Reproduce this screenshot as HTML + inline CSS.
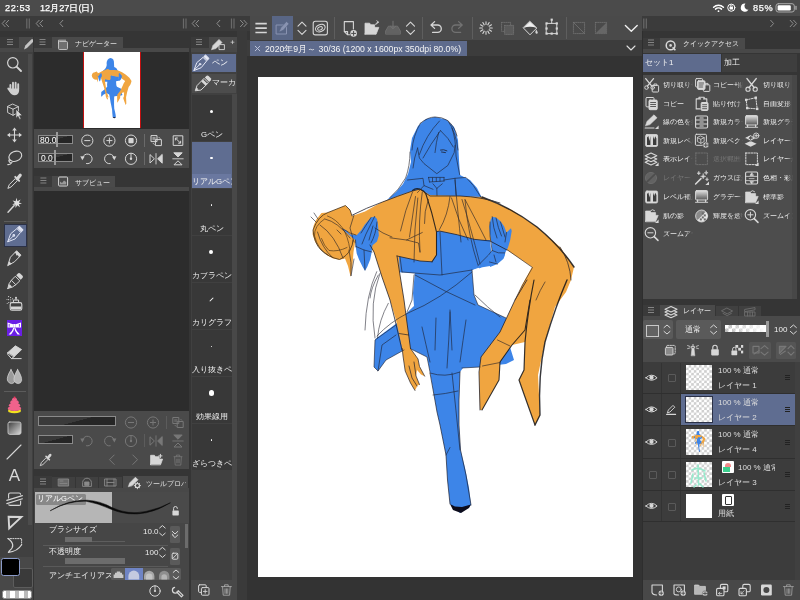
<!DOCTYPE html>
<html>
<head>
<meta charset="utf-8">
<title>CLIP STUDIO PAINT</title>
<style>
html,body{margin:0;padding:0;}
body{width:800px;height:600px;overflow:hidden;background:#3c3c3c;font-family:"Liberation Sans",sans-serif;color:#e6e6e6;font-size:8px;position:relative;}
.a{position:absolute;}
.t{position:absolute;white-space:nowrap;line-height:1;will-change:transform;}
svg{position:absolute;overflow:visible;}
.ic{stroke:#dcdcdc;fill:none;stroke-width:1.1;stroke-linecap:round;stroke-linejoin:round;}
.dim{opacity:.35;}
.sb{font-size:9.2px;color:#fff;-webkit-text-stroke:.25px #fff;}
.tab{font-size:7.4px;color:#e4e4e4;}
.lb{font-size:7.6px;color:#ececec;}
.sl{background:linear-gradient(165deg,#3a3a3a 0%,#3a3a3a 50%,#262626 51%,#262626 100%);border:1px solid #8a8a8a;box-sizing:border-box;}
.cell{position:absolute;left:191.5px;width:40px;height:46px;background:#383838;}
.cl{position:absolute;left:191.5px;width:40px;text-align:center;font-size:7.8px;color:#f0f0f0;white-space:nowrap;overflow:hidden;line-height:1;will-change:transform;}
.ly{font-size:8px;color:#dedede;}
.qa{font-size:6.8px;color:#f0f0f0;width:30.5px;overflow:hidden;-webkit-mask-image:linear-gradient(90deg,#000 76%,transparent 97%);}
.qd{color:#777;}
#opsl{background-color:#fff;background-image:linear-gradient(90deg,rgba(255,255,255,0),#fff),linear-gradient(45deg,#bbb 25%,transparent 25%,transparent 75%,#bbb 75%),linear-gradient(45deg,#bbb 25%,transparent 25%,transparent 75%,#bbb 75%);background-size:100% 100%,7px 7px,7px 7px;background-position:0 0,0 0,3.5px 3.5px;}
.dot{position:absolute;background:#fff;border-radius:50%;}
</style>
</head>
<body>
<!-- status bar -->
<div class="a" style="left:0;top:0;width:800px;height:16px;background:#4b4b4b;"></div>
<div class="t sb" style="left:5px;top:3.5px;letter-spacing:.55px;">22:53</div>
<div class="t sb" style="left:40px;top:3.5px;">12月27日(日)</div>
<div class="t sb" style="left:752.5px;top:3.5px;letter-spacing:.7px;">85%</div>

<!-- dock header rows -->
<div class="a" style="left:0;top:16px;width:800px;height:15px;background:#3b3b3b;"></div>
<div class="a" style="left:0;top:31px;width:800px;height:569px;background:#353535;"></div>

<!-- LEFT TOOL PALETTE -->
<div class="a" style="left:0;top:37px;width:19px;height:11px;background:#3a3a3a;"></div>
<div class="a" style="left:19px;top:37px;width:14px;height:11px;background:#4a4a4a;"></div>
<div class="a" style="left:0;top:48px;width:33px;height:4px;background:#484848;"></div>
<div class="a" style="left:0;top:52px;width:33px;height:548px;background:#404040;"></div>
<div class="a" style="left:27.5px;top:54px;width:4px;height:471px;background:#4c4c4c;"></div>
<div class="a" style="left:4px;top:221px;width:22px;height:1px;background:#5c5c5c;"></div>
<div class="a" style="left:4px;top:391px;width:22px;height:1px;background:#5c5c5c;"></div>
<div class="a" style="left:3.5px;top:223.5px;width:21px;height:21px;background:#5f6d91;border:1px solid #2b3147;"></div>
<div class="a" style="left:6.5px;top:320px;width:15.5px;height:15.5px;background:#6a1ee6;"></div>
<div class="a" style="left:0;top:556.5px;width:33px;height:43.5px;background:#484848;"></div>
<div class="a" style="left:12.5px;top:567.5px;width:18px;height:18px;background:#3a3a3a;border:1px solid #5c5c5c;border-radius:2px;"></div>
<div class="a" style="left:1.3px;top:557.5px;width:16.4px;height:16px;background:#000;border:1.4px solid #8b9bc9;border-radius:2.5px;"></div>
<div class="a" style="left:1.7px;top:590px;width:28px;height:6.5px;border:1px solid #8a8a8a;border-radius:2.5px;background:#fff;overflow:hidden;"><div class="a" style="left:3px;top:0;width:4.5px;height:7px;background:#bbb;box-shadow:9px 0 0 #bbb,18px 0 0 #bbb;"></div></div>

<!-- NAVIGATOR -->
<div class="a" style="left:34px;top:37px;width:18px;height:11px;background:#3a3a3a;"></div>
<div class="a" style="left:52px;top:37px;width:71px;height:11px;background:#4a4a4a;"></div>
<div class="t tab" style="left:75px;top:40.3px;">ナビゲーター</div>
<div class="a" style="left:34px;top:48px;width:155px;height:4px;background:#484848;"></div>
<div class="a" style="left:34px;top:52px;width:155px;height:77px;background:#2c2c2c;"></div>
<div class="a" style="left:83px;top:52px;width:58px;height:76px;background:#fff;border-left:1px solid #c01010;border-right:1px solid #c01010;box-sizing:border-box;"></div>
<div class="a" style="left:34px;top:128.7px;width:155px;height:39.8px;background:#4a4a4a;"></div>
<div class="a sl" style="left:38.3px;top:134.9px;width:34.4px;height:8.8px;"></div>
<div class="a sl" style="left:38.3px;top:153.4px;width:34.4px;height:8.8px;"></div>
<div class="t" style="left:39.5px;top:135.5px;font-size:8.5px;color:#fff;">80.0</div>
<div class="t" style="left:41px;top:154px;font-size:8.5px;color:#fff;">0.0</div>
<div class="a" style="left:55.8px;top:131.5px;width:2.2px;height:15px;background:#9a9a9a;"></div>
<div class="a" style="left:54.2px;top:150px;width:2.2px;height:15px;background:#9a9a9a;"></div>
<div class="a" style="left:144px;top:134px;width:1px;height:13px;background:#6a6a6a;"></div>
<div class="a" style="left:144px;top:152px;width:1px;height:13px;background:#6a6a6a;"></div>

<!-- SUBVIEW -->
<div class="a" style="left:34px;top:175.5px;width:18px;height:11.5px;background:#3a3a3a;"></div>
<div class="a" style="left:52px;top:175.5px;width:62.5px;height:11.5px;background:#4a4a4a;"></div>
<div class="t tab" style="left:74.5px;top:179px;">サブビュー</div>
<div class="a" style="left:34px;top:187px;width:155px;height:4px;background:#484848;"></div>
<div class="a" style="left:34px;top:191px;width:155px;height:220px;background:#2c2c2c;"></div>
<div class="a" style="left:34px;top:410.8px;width:155px;height:58.6px;background:#4a4a4a;"></div>
<div class="a sl" style="left:38.3px;top:416.3px;width:78px;height:9.3px;"></div>
<div class="a sl" style="left:38.3px;top:435.3px;width:34.4px;height:8.7px;"></div>
<div class="a" style="left:165.5px;top:416px;width:1px;height:13px;background:#5c5c5c;"></div>
<div class="a" style="left:144px;top:434px;width:1px;height:13px;background:#5c5c5c;"></div>

<!-- TOOL PROPERTY -->
<div class="a" style="left:34px;top:475.5px;width:18px;height:12px;background:#3a3a3a;"></div>
<div class="a" style="left:52.3px;top:476.5px;width:22.7px;height:11px;background:#404040;"></div>
<div class="a" style="left:76px;top:476.5px;width:22px;height:11px;background:#404040;"></div>
<div class="a" style="left:99px;top:476.5px;width:22.8px;height:11px;background:#404040;"></div>
<div class="a" style="left:122.8px;top:475.5px;width:65px;height:12px;background:#4a4a4a;"></div>
<div class="t tab" style="left:145.5px;top:479.8px;width:40px;overflow:hidden;">ツールプロパ</div>
<div class="a" style="left:34px;top:487.5px;width:155px;height:4px;background:#484848;"></div>
<div class="a" style="left:34px;top:491.5px;width:155px;height:88.5px;background:#464646;"></div>
<div class="a" style="left:35px;top:492px;width:77px;height:30.5px;background:#b6b6b6;"></div>
<div class="a" style="left:112px;top:492px;width:77px;height:30.5px;background:#4a4a4a;"></div>
<div class="a" style="left:36px;top:494px;width:50px;height:10.5px;background:rgba(120,120,120,.75);border-radius:1.5px;"></div>
<div class="t" style="left:37px;top:495px;font-size:7.6px;color:#fff;">リアルGペン</div>
<div class="t lb" style="left:48.7px;top:526px;">ブラシサイズ</div>
<div class="t lb" style="left:48.7px;top:547.5px;">不透明度</div>
<div class="t lb" style="left:48.7px;top:571.5px;">アンチエイリアス</div>
<div class="t lb" style="left:142.5px;top:527.5px;font-size:8px;">10.0</div>
<div class="t lb" style="left:145.3px;top:549.3px;font-size:8px;">100</div>
<div class="a" style="left:64.5px;top:540.6px;width:60px;height:1.2px;background:#5e5e5e;"></div>
<div class="a" style="left:64.5px;top:536.5px;width:27.5px;height:5px;background:#6c6c6c;"></div>
<div class="a" style="left:64.5px;top:558px;width:60px;height:5.5px;background:#6c6c6c;"></div>
<div class="a" style="left:43px;top:544.7px;width:125px;height:1px;background:#5a5a5a;"></div>
<div class="a" style="left:43px;top:566px;width:125px;height:1px;background:#5a5a5a;"></div>
<div class="a" style="left:169.5px;top:525.5px;width:10.5px;height:17.5px;background:#5a5a5a;border-radius:1.5px;"></div>
<div class="a" style="left:169.5px;top:547.5px;width:10.5px;height:17.5px;background:#5a5a5a;border-radius:1.5px;"></div>
<div class="a" style="left:111px;top:567.5px;width:69.5px;height:12.5px;background:#5a5a5a;border-radius:1.5px;"></div>
<div class="a" style="left:125px;top:567.5px;width:17.5px;height:12.5px;background:#6f84c4;"></div>
<div class="a" style="left:184.5px;top:524px;width:3.5px;height:23.5px;background:#6c6c6c;"></div>
<div class="a" style="left:34px;top:580px;width:155px;height:20px;background:#484848;"></div>

<!-- SUBTOOL -->
<div class="a" style="left:191px;top:37px;width:17.5px;height:11px;background:#3a3a3a;"></div>
<div class="a" style="left:208.5px;top:37px;width:28.5px;height:11px;background:#4a4a4a;"></div>
<div class="a" style="left:191px;top:48px;width:46px;height:4px;background:#484848;"></div>
<div class="a" style="left:191px;top:52px;width:46px;height:528px;background:#404040;"></div>
<div class="a" style="left:232px;top:94px;width:5px;height:486px;background:#484848;"></div>
<div class="a" style="left:191px;top:580px;width:46px;height:20px;background:#484848;"></div>
<div class="a" style="left:191.5px;top:54px;width:44px;height:18px;background:#5f6d91;"></div>
<div class="a" style="left:191.5px;top:74px;width:44px;height:18.5px;background:#4c4c4c;"></div>
<div class="t" style="left:212px;top:59px;font-size:7.6px;color:#fff;">ペン</div>
<div class="t" style="left:212px;top:79px;font-size:7.6px;color:#eee;width:23.5px;overflow:hidden;">マーカー</div>
<div class="cell" style="top:95px;background:#383838;"></div>
<div class="dot" style="left:209.8px;top:109.5px;width:3.0px;height:3.0px;"></div>
<div class="cl" style="top:130.5px;">Gペン</div>
<div class="cell" style="top:142px;background:#5f6d91;"></div>
<div class="a" style="left:192px;top:174px;width:39px;height:13.5px;background:#6a78a0;"></div>
<div class="dot" style="left:209.9px;top:156.6px;width:2.8px;height:2.8px;"></div>
<div class="cl" style="top:177.5px;text-align:left;">リアルGペン</div>
<div class="cell" style="top:189px;background:#383838;"></div>
<div class="dot" style="left:210.70000000000002px;top:204.4px;width:1.2px;height:1.2px;"></div>
<div class="cl" style="top:224.5px;">丸ペン</div>
<div class="cell" style="top:236px;background:#383838;"></div>
<div class="dot" style="left:209.4px;top:250.1px;width:3.8px;height:3.8px;"></div>
<div class="cl" style="top:271.5px;">カブラペン</div>
<div class="cell" style="top:283px;background:#383838;"></div>
<div class="a" style="left:209px;top:298.5px;width:5px;height:1px;background:#fff;transform:rotate(-45deg);"></div>
<div class="cl" style="top:318.5px;text-align:left;">カリグラフィ</div>
<div class="cell" style="top:330px;background:#383838;"></div>
<div class="dot" style="left:210.8px;top:345.5px;width:1.0px;height:1.0px;"></div>
<div class="cl" style="top:365.5px;text-align:left;">入り抜きペン</div>
<div class="cell" style="top:377px;background:#383838;"></div>
<div class="dot" style="left:208.6px;top:390.3px;width:5.4px;height:5.4px;"></div>
<div class="cl" style="top:412.5px;">効果線用</div>
<div class="cell" style="top:424px;background:#383838;"></div>
<div class="dot" style="left:210.5px;top:439.2px;width:1.6px;height:1.6px;"></div>
<div class="cl" style="top:459.5px;text-align:left;">ざらつきペン</div>

<!-- COMMAND BAR -->
<div class="a" style="left:237px;top:31px;width:10px;height:569px;background:#3a3a3a;"></div>
<div class="a" style="left:250px;top:16px;width:391.5px;height:24px;background:#4a4a4a;"></div>
<div class="a" style="left:272px;top:16px;width:21px;height:24px;background:#596685;"></div>
<div class="a" style="left:334px;top:17px;width:1px;height:22px;background:#5e5e5e;"></div>
<div class="a" style="left:422px;top:17px;width:1px;height:22px;background:#5e5e5e;"></div>
<div class="a" style="left:472px;top:17px;width:1px;height:22px;background:#5e5e5e;"></div>
<div class="a" style="left:566px;top:17px;width:1px;height:22px;background:#5e5e5e;"></div>
<!-- DOC TAB -->
<div class="a" style="left:247px;top:40px;width:394.5px;height:16px;background:#3c3c3c;"></div>
<div class="a" style="left:250px;top:41px;width:216.5px;height:15px;background:#5e6b8d;"></div>
<div class="t" id="doct" style="left:264.5px;top:45px;font-size:8.7px;color:#f4f4f4;">2020年9月～ 30/36 (1200 x 1600px 350dpi 80.0%)</div>
<!-- CANVAS AREA -->
<div class="a" style="left:247px;top:56px;width:394.5px;height:544px;background:#333333;"></div>
<div class="a" style="left:258px;top:77px;width:375.3px;height:500px;background:#ffffff;"></div>

<!-- QUICK ACCESS -->
<div class="a" style="left:641.5px;top:31px;width:1.5px;height:569px;background:#2e2e2e;"></div>
<div class="a" style="left:643px;top:37.5px;width:17px;height:11px;background:#3a3a3a;"></div>
<div class="a" style="left:660px;top:37.5px;width:85px;height:11px;background:#4a4a4a;"></div>
<div class="t tab" style="left:683px;top:39.5px;">クイックアクセス</div>
<div class="a" style="left:643px;top:48.5px;width:157px;height:4px;background:#484848;"></div>
<div class="a" style="left:643px;top:53.5px;width:77.5px;height:18.5px;background:#5e6b8d;"></div>
<div class="a" style="left:721.5px;top:53.5px;width:75.5px;height:18.5px;background:#3e3e3e;"></div>
<div class="t" style="left:645px;top:59px;font-size:8px;color:#f0f0f0;">セット1</div>
<div class="t" style="left:723.5px;top:59px;font-size:8px;color:#f0f0f0;">加工</div>
<div class="a" style="left:643px;top:74.5px;width:154px;height:224.5px;background:#4d4d4d;"></div>
<div class="a" style="left:791.5px;top:74.5px;width:5.5px;height:224.5px;background:#474747;"></div>
<div class="t qa" style="left:662.6px;top:82.0px;">切り取り+貼</div>
<div class="t qa" style="left:712.6px;top:82.0px;">コピー+貼り</div>
<div class="t qa" style="left:762.6px;top:82.0px;">切り取り</div>
<div class="t qa" style="left:662.6px;top:100.5px;">コピー</div>
<div class="t qa" style="left:712.6px;top:100.5px;">貼り付け</div>
<div class="t qa" style="left:762.6px;top:100.5px;">自由変形</div>
<div class="t qa" style="left:662.6px;top:119.0px;">線の色を描</div>
<div class="t qa" style="left:712.6px;top:119.0px;">新規カラー</div>
<div class="t qa" style="left:762.6px;top:119.0px;">新規グラデ</div>
<div class="t qa" style="left:662.6px;top:137.5px;">新規レベル</div>
<div class="t qa" style="left:712.6px;top:137.5px;">新規ベクタ</div>
<div class="t qa" style="left:762.6px;top:137.5px;">レイヤーを</div>
<div class="t qa" style="left:662.6px;top:156.0px;">表示レイヤ</div>
<div class="t qa qd" style="left:712.6px;top:156.0px;">選択範囲を</div>
<div class="t qa" style="left:762.6px;top:156.0px;">レイヤーか</div>
<div class="t qa qd" style="left:662.6px;top:175.0px;">レイヤーマ</div>
<div class="t qa" style="left:712.6px;top:175.0px;">ガウスぼか</div>
<div class="t qa" style="left:762.6px;top:175.0px;">色相・彩度</div>
<div class="t qa" style="left:662.6px;top:194.0px;">レベル補正</div>
<div class="t qa" style="left:712.6px;top:194.0px;">グラデーシ</div>
<div class="t qa" style="left:762.6px;top:194.0px;">標準影</div>
<div class="t qa" style="left:662.6px;top:213.0px;">肌の影</div>
<div class="t qa" style="left:712.6px;top:213.0px;">輝度を透明</div>
<div class="t qa" style="left:762.6px;top:213.0px;">ズームイン</div>
<div class="t qa" style="left:662.6px;top:231.0px;">ズームアウ</div>

<!-- LAYER PANEL -->
<div class="a" style="left:643px;top:305px;width:17px;height:11px;background:#3a3a3a;"></div>
<div class="a" style="left:660px;top:305px;width:55px;height:11px;background:#4a4a4a;"></div>
<div class="a" style="left:716.4px;top:306px;width:21.6px;height:10px;background:#404040;"></div>
<div class="a" style="left:739.4px;top:306px;width:21.6px;height:10px;background:#404040;"></div>
<div class="t tab" style="left:683px;top:307px;">レイヤー</div>
<div class="a" style="left:643px;top:316px;width:157px;height:46px;background:#4a4a4a;"></div>
<div class="a" style="left:643px;top:320px;width:30px;height:19px;background:#5a5a5a;border-radius:2px;"></div>
<div class="a" style="left:676px;top:320px;width:45px;height:19px;background:#5a5a5a;border-radius:2px;"></div>
<div class="a" style="left:646.4px;top:325px;width:11px;height:10px;border:1px solid #c8c8c8;background:#626262;"></div>
<div class="t" style="left:685px;top:325.5px;font-size:8px;color:#f0f0f0;">通常</div>
<div class="a" id="opsl" style="left:725px;top:325px;width:42px;height:7px;"></div>
<div class="a" style="left:766px;top:321px;width:2.5px;height:16px;background:#9a9a9a;"></div>
<div class="t" style="left:774.4px;top:326px;font-size:8px;color:#f0f0f0;">100</div>
<div class="a" style="left:749px;top:342px;width:22px;height:17px;background:#555555;border-radius:1.5px;"></div>
<div class="a" style="left:776px;top:342px;width:20px;height:17px;background:#555555;border-radius:1.5px;"></div>
<div class="a" style="left:643px;top:362px;width:157px;height:218px;background:#3c3c3c;"></div>
<div class="a" style="left:794.5px;top:362px;width:5.5px;height:218px;background:#404040;"></div>
<div class="a" style="left:643px;top:393px;width:151.5px;height:1px;background:#2f2f2f;"></div>
<div class="a" style="left:685.6px;top:365.1px;width:26px;height:24.9px;background-color:#fff;background-image:linear-gradient(45deg,#cfcfcf 25%,transparent 25%,transparent 75%,#cfcfcf 75%),linear-gradient(45deg,#cfcfcf 25%,transparent 25%,transparent 75%,#cfcfcf 75%);background-size:5.2px 5.2px;background-position:0 0,2.6px 2.6px;"></div>
<div class="t ly" style="left:718px;top:367.0px;">100 % 通常</div>
<div class="t ly" style="left:718px;top:382.0px;">レイヤー 1</div>
<div class="a" style="left:661px;top:362.5px;width:1px;height:30.5px;background:#333;"></div>
<div class="a" style="left:680px;top:362.5px;width:1px;height:30.5px;background:#333;"></div>
<div class="a" style="left:667.5px;top:374.25px;width:6px;height:6px;border:1px solid #5a5a5a;border-radius:1px;"></div>
<div class="a" style="left:784.5px;top:375.25px;width:5px;height:1px;background:#222;box-shadow:0 2px 0 #222,0 4px 0 #222;"></div>
<div class="a" style="left:681px;top:394px;width:113.5px;height:31px;background:#5f6d91;"></div>
<div class="a" style="left:643px;top:425px;width:151.5px;height:1px;background:#2f2f2f;"></div>
<div class="a" style="left:685.6px;top:396.6px;width:26px;height:25.4px;background-color:#fff;background-image:linear-gradient(45deg,#cfcfcf 25%,transparent 25%,transparent 75%,#cfcfcf 75%),linear-gradient(45deg,#cfcfcf 25%,transparent 25%,transparent 75%,#cfcfcf 75%);background-size:5.2px 5.2px;background-position:0 0,2.6px 2.6px;outline:1px solid #2b3147;"></div>
<div class="t ly" style="left:718px;top:398.5px;">100 % 通常</div>
<div class="t ly" style="left:718px;top:413.5px;">レイヤー 2</div>
<div class="a" style="left:661px;top:394px;width:1px;height:31px;background:#333;"></div>
<div class="a" style="left:680px;top:394px;width:1px;height:31px;background:#333;"></div>
<div class="a" style="left:784.5px;top:407.0px;width:5px;height:1px;background:#222;box-shadow:0 2px 0 #222,0 4px 0 #222;"></div>
<div class="a" style="left:643px;top:458px;width:151.5px;height:1px;background:#2f2f2f;"></div>
<div class="a" style="left:685.6px;top:428.6px;width:26px;height:26.4px;background-color:#fff;background-image:linear-gradient(45deg,#cfcfcf 25%,transparent 25%,transparent 75%,#cfcfcf 75%),linear-gradient(45deg,#cfcfcf 25%,transparent 25%,transparent 75%,#cfcfcf 75%);background-size:5.2px 5.2px;background-position:0 0,2.6px 2.6px;"></div>
<div class="t ly" style="left:718px;top:430.5px;">100 % 通常</div>
<div class="t ly" style="left:718px;top:445.5px;">レイヤー 4</div>
<div class="a" style="left:661px;top:426px;width:1px;height:32px;background:#333;"></div>
<div class="a" style="left:680px;top:426px;width:1px;height:32px;background:#333;"></div>
<div class="a" style="left:667.5px;top:438.5px;width:6px;height:6px;border:1px solid #5a5a5a;border-radius:1px;"></div>
<div class="a" style="left:784.5px;top:439.5px;width:5px;height:1px;background:#222;box-shadow:0 2px 0 #222,0 4px 0 #222;"></div>
<div class="a" style="left:643px;top:490px;width:151.5px;height:1px;background:#2f2f2f;"></div>
<div class="a" style="left:685.6px;top:461.6px;width:26px;height:25.4px;background-color:#fff;background-image:linear-gradient(45deg,#cfcfcf 25%,transparent 25%,transparent 75%,#cfcfcf 75%),linear-gradient(45deg,#cfcfcf 25%,transparent 25%,transparent 75%,#cfcfcf 75%);background-size:5.2px 5.2px;background-position:0 0,2.6px 2.6px;"></div>
<div class="a" style="left:722px;top:461px;width:12px;height:12px;background:#fff;border-radius:1px;"></div>
<div class="a" style="left:724.5px;top:462.5px;width:6px;height:4px;background:#f08a8a;border-radius:3px 3px 0 0;"></div>
<div class="a" style="left:723px;top:466.5px;width:7px;height:5px;background:#3ccf8e;"></div>
<div class="t ly" style="left:737.6px;top:463.5px;width:37px;overflow:hidden;">100 % 通常</div>
<div class="t ly" style="left:718px;top:478.5px;">レイヤー 3</div>
<div class="a" style="left:661px;top:459px;width:1px;height:31px;background:#333;"></div>
<div class="a" style="left:680px;top:459px;width:1px;height:31px;background:#333;"></div>
<div class="a" style="left:667.5px;top:471.0px;width:6px;height:6px;border:1px solid #5a5a5a;border-radius:1px;"></div>
<div class="a" style="left:648.5px;top:471.0px;width:6px;height:6px;border:1px solid #5a5a5a;border-radius:1px;"></div>
<div class="a" style="left:784.5px;top:472.0px;width:5px;height:1px;background:#222;box-shadow:0 2px 0 #222,0 4px 0 #222;"></div>
<div class="a" style="left:643px;top:521px;width:151.5px;height:1px;background:#2f2f2f;"></div>
<div class="a" style="left:685.6px;top:493.6px;width:26px;height:24.4px;background:#fff;"></div>
<div class="a" style="left:722px;top:494px;width:12px;height:11.5px;background:#fff;border-radius:1px;"></div>
<div class="a" style="left:724.5px;top:496px;width:5.5px;height:7px;border:1px solid #333;border-radius:1px;"></div>
<div class="t ly" style="left:718px;top:510px;">用紙</div>
<div class="a" style="left:661px;top:491px;width:1px;height:30px;background:#333;"></div>
<div class="a" style="left:680px;top:491px;width:1px;height:30px;background:#333;"></div>
<div class="a" style="left:667.5px;top:502.5px;width:6px;height:6px;border:1px solid #5a5a5a;border-radius:1px;"></div>
<div class="a" style="left:784.5px;top:503.5px;width:5px;height:1px;background:#222;box-shadow:0 2px 0 #222,0 4px 0 #222;"></div>
<div class="a" style="left:643px;top:580px;width:157px;height:20px;background:#484848;"></div>

<!-- ARTWORK -->
<svg id="art" style="left:0;top:0;" width="800" height="600" viewBox="0 0 800 600">
<defs>
<g id="artfill">
<g fill="#3d85e8" stroke="none">
<path d="M435,117 L426,119 L418,126 L412,138 L410,150 L411,162 L408,174 L403,184 L396,192 L388,199 L384,204 L400,215 L480,215 L483,200 L477,188 L470,180 L460,175 L459,160 L458,140 L454,127 L446,119.5 Z"/>
<path d="M398.3,250 L399.2,272.2 L414.8,273.2 L413,293 L414,306 L402,317.5 L396,323.7 L376.7,338 L375,340 L374,367 L378,371 L386,360 L404,350 L411,349 L427,357 L430,372 L434,395 L437,412 L440,425 L446,455 L447.5,480 L450,504 L460,513 L471,505 L469,488 L465,468 L460.5,450 L459,425 L459,400 L460,372 L463,368 L480,367 L506,364 L514,360 L510,347 L506,318 L478,305 L474,295 L472,270 L478,267 L490,240 L440,228 Z"/>
</g>
<path fill="#f0a540" d="M312.5,234 L313.5,226 L316,220 L321.5,213 L328,212.5 L345.5,205.5 L350,210 L352,216 L365,211.5 L382,202 L400,195 L412,191 L420,189 L430,195 L460,196 L482,197 L512,210 L537,227 L560,247 L574,267 L571,280 L566,292 L555,307 L545,342 L538,375 L540,415 L535,425 L525,397 L519,380 L524,370 L525,342 L512,345 L500,362 L499,380 L482,410 L480,410 L479,372 L481,357 L500,332 L515,300 L522,285 L532,267 L507,250 L490,241 L474,239.3 L457.5,234.8 L439.5,231 L436.5,231.8 L436.5,255 L432,261.8 L420,261 L399,256.5 L400,275 L404,300 L407.3,325 L410.5,348.5 L418,359 L419.5,366.5 L424.7,376.2 L421,374.5 L417,370 L416,376 L419.5,384.5 L417.5,385.5 L415,390.5 L410.5,383 L405.2,371 L403,356 L402.2,348.5 L396,320 L390,300 L382,277 L374,252 L368,245 L355,243 L353.5,252 L352.5,265 L350.7,277 L348,266 L345,258.5 L339.5,259.8 L333,258.5 L327.5,255.5 L320,249 L315,241.5 Z"/>
<g fill="#3d85e8" stroke="none">
<path d="M342.5,228.7 L346.2,230.2 L350,234.3 L356.7,235.2 L361.2,230.2 L365,224.2 L371,217.5 L374.7,216.4 L377,219 L378,225 L378.8,235.5 L377,241.5 L372.5,245.2 L371.7,252 L370.2,259.5 L367.2,267 L365,270.7 L362.7,267 L359,259.5 L356.7,253.5 L355.7,246.7 L355.2,240 L351.5,237 L345.5,231.7 Z"/>
<path d="M472,270 L478,268 L490,266 L491,250 L490,240 L474,240 Z"/>
<path d="M492.2,216.7 L496,217.5 L500.5,221.2 L504.2,226.5 L506.5,232.5 L511,228.3 L511.7,231 L510.2,240 L508,247.5 L505,253 L505,255 L503.5,258.7 L497.5,264 L490,267 L489.5,262 L479.5,268.5 L478,265.5 L488.5,255 L492,250.5 L491.5,243 L490,234 L489.2,226.5 L490.7,219.7 Z"/>
</g>
<path d="M450,504 L455,506.5 L462,507 L471,504.5 L469,508 L461,513 L453,510 Z" fill="#0c0c1c"/>
</g>
</defs>
<use href="#artfill"/>
<g id="artline" fill="none" stroke="#1c1c28" stroke-width=".7" stroke-linecap="round" stroke-linejoin="round" opacity=".85">
<!-- blue head -->
<path d="M420.3,123.3 Q428,117 435,117 Q442,117 447.8,120.6 Q455,127 457,136" stroke-width=".8"/>
<path d="M417.6,148 L419.4,158 L424,163.6 L436.8,173.7 L447.8,165.5 L454.2,152.6 L455,145.3"/>
<path d="M439.5,121 Q426,135 419.4,154.5 M440.5,130.6 Q430,145 423,158 M440.5,130.6 Q449,138 453.3,147 M438.6,132.5 Q436,143 435,152.6"/>
<path d="M447.8,120.6 Q456,132 458,150 M452,128 Q456,140 456,156 L459.7,174.6 M420.3,123.3 Q413,136 412,150 M417.6,148 Q414,158 413,168 M410,152 Q410,166 405.6,178 L398.3,189 L390,197.5"/>
<path d="M440.5,150 Q443.5,149 446.9,150.8 M441.5,152 L445.5,152.6" stroke-width=".9"/>
<path d="M428.5,177.4 H444 M429.5,182 L444,181 M428.5,177.4 L429.5,182 M444,177.4 V181 M432.5,177.8 V181.5 M436.3,177.8 V181.4 M440,177.8 V181.2"/>
<path d="M433,183.8 L436.8,188.4 L442.3,183.8 M436.8,188.4 L437,195.5"/>
<path d="M407.5,180 L423,178.3 L424,185.6 L433,189.3 M424,185.6 L417.5,192.5 M444,180 L455,178.3 L466,177.4 L473.4,185.6 L481.7,198.4 M455,178.3 L456,195"/>
<path d="M455,180 Q458,215 461,242 M465,200 Q468,235 478,265"/>
<!-- orange top edge & body -->
<path d="M352.5,215 Q366,208 382.5,202 Q398,196 412.5,191 L420,189 L430,196 L460,196 Q482,197 500,203" stroke-width=".9"/>
<path d="M482,197 Q512,208 537,227 Q560,246 574,267" stroke-width="1.5" stroke="#141418"/>
<path d="M560,247 Q570,262 571,280" stroke-width=".8"/>
<path d="M412.5,192 Q405,210 400.5,231 M415.5,196.5 L409.5,237 M417.8,198 Q414,230 414,262 M422.3,192 Q418,220 420,252 M428.3,199.5 Q424,212 424.5,223.5 M450,196.5 Q448,215 439.5,229.5 M451.5,198 Q458,220 468,240 M462,199.5 Q470,225 480,264 M465,199.5 Q476,220 486,240 M390,237.8 L406.5,240 L422.3,232.5 M406.5,240 L418.5,243 L420,252"/>
<path d="M426,194.3 Q432,212 436.5,231.8 L436.5,255 L432,261.8" stroke-width="1.1" stroke="#141418"/>
<path d="M412.5,190.5 Q416,187.5 420,189.3 Q424,190.5 426,194" stroke-width="1.1" stroke="#141418"/>
<path d="M397,256 L420,261 L432,261.8 M436.5,231.8 L439.5,231 L457.5,234.8 L474,239.3 L490,241 L507,250" stroke-width=".9"/>
<path d="M375,228 L383,233 L392,237"/>
<!-- orange head -->
<path d="M352,216 L350,210 L345.5,205.5 L328,212.5 Q318,216 313,230 Q314,243 321,250 Q328,257 339.5,259.5 Q347,256 350,250 Q353,245 353,240" stroke-width=".9" stroke="#3a2a18"/><path d="M324.5,219 Q314,226 314.5,236 Q318,250 328,255 M321.5,238.5 Q324,246 329,250.5 Q338,252 347,247.5 M327.5,216 Q336,219 342.5,228 Q348,236 350,250" stroke="#3a2a18" stroke-width=".7"/>
<path d="M320,225 Q335,235 343,258 M325,219 Q338,222 350,238 M317.5,232 Q322,248 332.5,257.5 M349,250 Q352,262 351,276 L354,259 M354,215 L350,228 L354,242 M337,230 L341,234 M316,222 L311,217 M318,219 L314,213"/>
<!-- hanging arm -->
<path d="M370,245 L374,252 L382,277 L390,300 L395,320 L402,350" stroke-width=".9"/>
<path d="M397,256 L400,275 L404,300 L407.3,325 L410.5,348.5" stroke-width=".9"/>
<path d="M376.7,271.7 Q366,295 365,330 M380,273.3 Q369,302 375,338 M388.3,303.3 Q379,320 377.5,338 M378.3,275 Q371,288 370,298" stroke-width=".65"/>
<path d="M402.2,348.5 L403,356 L405.2,371 L410.5,383 L415,390.5 M410.5,348.5 L418,359 L419.5,366.5 L424.7,376.2 M414,362 L416,376 L419.5,384.5 M409,366 L412,378 L417,386 M399,333.5 L408.7,335" stroke-width=".8"/>
<!-- blue torso & skirt -->
<path d="M402,272 L414,273 L440,275 L472,270 M440,232 L442,275 M400,257 L402,272 M414,275 L412,300 L407,312 M472,270 L474,295 L478,305 L506,318"/>
<path d="M415,275 Q445,292 475,305 M472,272 Q440,300 408,313 Q390,322 377,336 M450,310 L452,350 M436,318 L435,350 M475,295 Q488,308 500,317"/>
<path d="M396,325 L375,340 L374,367 L378,371 L382,345 L396,335 M378,371 L386,360 L404,350"/>
<path d="M422,327 Q426,345 430,362 M450,312 Q449,340 447,368 M466,320 Q463,340 460,362 M411,349 L427,357 L430,372"/>
<path d="M430,373 Q445,378 460,372 M433,395 Q445,394 458,391 M452,373 Q456,410 460,450 M462,368 L480,367"/>
<path d="M430,373 L434,395 L437,412 L440,425 L446,455 L447.5,480 L450,504 M460,372 L459,400 L459,425 L460.5,450 L466,475 L471,505" stroke-width=".8"/>
<path d="M446,455 L450,447.5"/>
<!-- orange legs -->
<path d="M567,280 Q556,305 545,342 Q538,375 540,415 L535,425" stroke-width="1.4" stroke="#141418"/>
<path d="M534,280 Q528,310 525,342 L524,370 L519,380 L525,397 L535,425" stroke-width="1.2" stroke="#141418"/>
<path d="M527,280 L515,300 L500,332 L481,357 L479,372 L480,410" stroke-width=".9"/>
<path d="M530,300 L525,330 L512,345 L500,362 L499,380 L482,410" stroke-width="1.1" stroke="#141418"/>
<path d="M507.5,250 L532.5,267.5 L522.5,285 L515,300 M497.5,340 L510,346 M482.5,366 L500,362.5 M536,300 Q540,290 545,282"/>
<!-- hands -->
<path d="M374.7,216.4 L366,234 L362,244 M371,217.5 L361,233 M377,222 Q376,234 371,243 M373,226 L369,240 M356,246.5 L364,250 L372,252 M364,250 L365,270 M342.5,228.7 L350,233 L356,235 M355.5,240 L356,247"/>
<path d="M492.2,216.7 Q493,228 497,238 M496,218 Q498,228 501.5,236 M500.5,222 Q503,230 505,237 M506.5,232.5 L505,242 M490,222 Q489,236 492,250 M492,250.5 Q498,254 505,253 M492,250.5 L488.5,255 L478,265.5 M489.5,262 L497.5,264 M494,255 L496,262"/>
</g>
</svg>
<svg id="ico" style="left:0;top:0;" width="800" height="600" viewBox="0 0 800 600">
<path d="M5.4,20.0 L2.1999999999999997,23.5 L5.4,27.0" stroke="#8c8c8c" fill="none" stroke-width="1"/>
<path d="M8.9,20.0 L5.699999999999999,23.5 L8.9,27.0" stroke="#8c8c8c" fill="none" stroke-width="1"/>
<path d="M26.8,18.5 V28.5 M29.3,18.5 V28.5" stroke="#6a6a6a" stroke-width="1.2" fill="none"/>
<path d="M39.4,20.0 L36.199999999999996,23.5 L39.4,27.0" stroke="#8c8c8c" fill="none" stroke-width="1"/>
<path d="M42.9,20.0 L39.699999999999996,23.5 L42.9,27.0" stroke="#8c8c8c" fill="none" stroke-width="1"/>
<path d="M63.1,20.0 L59.9,23.5 L63.1,27.0" stroke="#8c8c8c" fill="none" stroke-width="1"/>
<path d="M183.5,18.5 V28.5 M186.0,18.5 V28.5" stroke="#6a6a6a" stroke-width="1.2" fill="none"/>
<path d="M195.4,20.0 L192.20000000000002,23.5 L195.4,27.0" stroke="#8c8c8c" fill="none" stroke-width="1"/>
<path d="M198.9,20.0 L195.70000000000002,23.5 L198.9,27.0" stroke="#8c8c8c" fill="none" stroke-width="1"/>
<path d="M220.1,20.0 L216.9,23.5 L220.1,27.0" stroke="#8c8c8c" fill="none" stroke-width="1"/>
<path d="M231.5,18.5 V28.5 M234.0,18.5 V28.5" stroke="#6a6a6a" stroke-width="1.2" fill="none"/>
<path d="M240.20000000000002,20.0 L243.4,23.5 L240.20000000000002,27.0" stroke="#8c8c8c" fill="none" stroke-width="1"/>
<path d="M243.70000000000002,20.0 L246.9,23.5 L243.70000000000002,27.0" stroke="#8c8c8c" fill="none" stroke-width="1"/>
<path d="M643.8,18.5 V28.5 M646.3,18.5 V28.5" stroke="#6a6a6a" stroke-width="1.2" fill="none"/>
<path d="M770.4,20.0 L773.6,23.5 L770.4,27.0" stroke="#8c8c8c" fill="none" stroke-width="1"/>
<path d="M789.9,20.0 L793.1,23.5 L789.9,27.0" stroke="#8c8c8c" fill="none" stroke-width="1"/>
<path d="M793.4,20.0 L796.6,23.5 L793.4,27.0" stroke="#8c8c8c" fill="none" stroke-width="1"/>
<path d="M7,39.5 H13 M7,42 H13 M7,44.5 H13" stroke="#8c8c8c" stroke-width="0.9" fill="none"/>
<path d="M39.5,39.5 H45.5 M39.5,42 H45.5 M39.5,44.5 H45.5" stroke="#8c8c8c" stroke-width="0.9" fill="none"/>
<path d="M40.4,178.0 H46.4 M40.4,180.5 H46.4 M40.4,183.0 H46.4" stroke="#8c8c8c" stroke-width="0.9" fill="none"/>
<path d="M40,479.0 H46 M40,481.5 H46 M40,484.0 H46" stroke="#8c8c8c" stroke-width="0.9" fill="none"/>
<path d="M196,39.5 H202 M196,42 H202 M196,44.5 H202" stroke="#8c8c8c" stroke-width="0.9" fill="none"/>
<path d="M648,40.0 H654 M648,42.5 H654 M648,45.0 H654" stroke="#8c8c8c" stroke-width="0.9" fill="none"/>
<path d="M648,307.5 H654 M648,310 H654 M648,312.5 H654" stroke="#8c8c8c" stroke-width="0.9" fill="none"/>
<g fill="none" stroke="#fff" stroke-linecap="round">
<path d="M713.6,7.2 A7,7 0 0 1 723.4,7.2" stroke-width="1.5"/>
<path d="M715.5,9.1 A4.3,4.3 0 0 1 721.5,9.1" stroke-width="1.5"/>
<circle cx="718.5" cy="11.2" r="0.9" fill="#fff" stroke="none"/>
<circle cx="731.3" cy="7.7" r="3.6" stroke-width="1"/>
<rect x="729.6" y="6.8" width="3.4" height="2.6" fill="#fff" stroke="none" rx=".5"/>
<path d="M730.4,6.8 V6 A.9,.9 0 0 1 732.2,6 V6.8" stroke-width=".7"/>
<path d="M745.4,3.6 A4.1,4.1 0 1 0 748.5,9.6 A3.6,3.6 0 0 1 745.4,3.6 Z" fill="#fff" stroke="none"/>
<rect x="776" y="3.7" width="18.3" height="8.3" rx="2.3" stroke="#aaa" stroke-width="1"/>
<rect x="777.6" y="5.3" width="13.2" height="5.1" rx="1.2" fill="#fff" stroke="none"/>
<path d="M796,6.5 V9.3" stroke="#aaa" stroke-width="1.3"/>
</g>
<defs><linearGradient id="gradtool" x1="0" y1="0" x2="1" y2="1"><stop offset="0" stop-color="#3c3c3c"/><stop offset="1" stop-color="#dcdcdc"/></linearGradient></defs>
<g id="tools" stroke="#d6d6d6" fill="none" stroke-width="1.1" stroke-linecap="round" stroke-linejoin="round">
<path d="M24,49.5 L25.3,45.5 L31.5,39.3 L33,39.3 L33,42 L27,48 Z" fill="#c4c4c4" stroke="none"/>
<!-- magnifier -->
<circle cx="12.8" cy="62.8" r="5.2" stroke-width="1.2"/><path d="M16.8,66.8 L21,71" stroke-width="1.9"/>
<!-- hand -->
<g stroke="#cfcfcf" stroke-width="1.9"><path d="M10.4,89.5 V85 M13,88.5 V82.8 M15.6,88.5 V82.8 M18.2,89 V84.3 M8.3,88.6 L10.8,92"/></g>
<path d="M9.6,88.5 H19.1 V91 Q18.2,95.3 14.6,95.3 Q11,95.3 9.6,91.5 Z" fill="#cfcfcf" stroke="none"/>
<!-- 3d cursor -->
<path d="M13,104.2 L18.4,106.7 L18.4,112.5 L13,115.3 L7.6,112.5 L7.6,106.7 Z M7.6,106.7 L13,109.2 L18.4,106.7 M13,109.2 V115.3" stroke-width=".9"/>
<path d="M16,109.5 L16,118.2 L18,116.3 L19.6,119.4 L21,118.7 L19.5,115.7 L22.2,115.5 Z" fill="#d6d6d6" stroke="#404040" stroke-width=".6"/>
<!-- move -->
<path d="M14.5,129.5 V140.5 M9,135 H20"/>
<path d="M14.5,127.5 L12.2,130.6 H16.8 Z M14.5,142.5 L12.2,139.4 H16.8 Z M7,135 L10.1,132.7 V137.3 Z M22,135 L18.9,132.7 V137.3 Z" fill="#d6d6d6" stroke="none"/>
<!-- lasso -->
<ellipse cx="15.3" cy="156.3" rx="6.6" ry="4.9" transform="rotate(-22 15.3 156.3)"/>
<path d="M10.2,160.2 Q8.5,159.2 9,161.3 Q10,163.5 12,162.5 Q10.5,164.8 7.8,164.6"/>
<!-- eyedropper -->
<path d="M8,188 L9.3,184.6 L15.3,178.6 L17.4,180.7 L11.4,186.7 Z" stroke-width="1"/>
<path d="M15.2,176.8 L19.2,180.8" stroke-width="1.9"/><path d="M17.6,178.4 L20.2,175.2" stroke-width="3.2"/>
<!-- wand -->
<path d="M8,212.3 L14.2,205.6" stroke-width="1.4"/>
<path d="M16.6,197.8 L17.4,201.2 L20.6,199.6 L18.9,202.6 L22,203.4 L18.8,204.2 L20,207.2 L17.2,205.3 L15.6,208 L15.4,204.7 L12.2,204.8 L14.8,203 L12.6,200.4 L15.6,201.3 Z" fill="#e0e0e0" stroke="none"/>
<!-- pen (selected) -->
<g stroke="#dfe3f3"><path d="M7.8,241.5 L10.6,233.8 L16.9,228.6 L20.6,232.3 L15.4,238.6 Z M7.8,241.5 L13.4,235.9" stroke-width="1"/><circle cx="13.8" cy="235.4" r=".8"/><path d="M17.6,227.9 L19.4,226.3 L22.9,229.8 L21.3,231.6 Z" fill="#dfe3f3"/></g>
<!-- pencil -->
<path d="M7.8,265.3 L10.4,257.2 L16.6,250.8 L21,255.2 L14.8,261.5 Z" stroke-width="1"/>
<path d="M7.8,265.3 L9.1,261.3 L11.8,264 Z M16.6,250.8 L21,255.2 L19,257.2 L17.9,255.2 L16.4,255.6 L15.7,253.3 L14.4,253.1 Z" fill="#d6d6d6" stroke="none"/>
<!-- brush -->
<path d="M7.8,288.5 Q8.4,283 11.4,280.3 L15.8,284.7 Q13,287.6 7.8,288.5 Z M11.4,280.3 L15.2,276.3 L19.8,280.9 L15.8,284.7" stroke-width="1"/>
<path d="M16.2,275.3 L18.2,273.3 Q19.3,272.6 20.2,273.5 L22.5,275.8 Q23.4,276.8 22.6,277.8 L20.7,279.8 Z" fill="#d6d6d6" stroke="none"/>
<path d="M7.8,288.5 L9.6,284 L12,286.7 Z" fill="#d6d6d6" stroke="none"/>
<!-- airbrush -->
<rect x="10.2" y="302.6" width="11.6" height="7.6" rx="1.8"/><path d="M10.8,306.6 H21.2 V308.6 Q21.2,309.6 20,309.6 H12 Q10.8,309.6 10.8,308.6 Z" fill="#d6d6d6" stroke="none"/>
<path d="M13.4,302.6 V300 H18.6 V302.6 M16,300 V298.2" stroke-width="1"/><circle cx="16" cy="297.8" r="1" fill="#d6d6d6" stroke="none"/>
<g fill="#d6d6d6" stroke="none"><circle cx="12.6" cy="298.8" r=".6"/><circle cx="10.6" cy="297.6" r=".6"/><circle cx="8.6" cy="296.6" r=".6"/><circle cx="10.8" cy="299.8" r=".6"/><circle cx="8.6" cy="299.6" r=".6"/><circle cx="7" cy="299.4" r=".5"/><circle cx="10.8" cy="302" r=".6"/><circle cx="8.8" cy="302.6" r=".6"/><circle cx="7.2" cy="303.6" r=".5"/></g>
<!-- deco ribbon -->
<g fill="#fff" stroke="none"><path d="M7.6,322.6 L13,324.2 L13,327.6 L7.6,327.4 Z M21,322.6 L15.6,324.2 L15.6,327.6 L21,327.4 Z M13.2,324 H15.4 V327.4 H13.2 Z"/><path d="M13.4,327.6 Q12.6,331.4 8.6,334.4 L11,334.6 Q14,331.6 14.4,327.6 Z M15.2,327.6 Q16,331.4 20,334.4 L17.6,334.6 Q14.6,331.6 14.2,327.6 Z"/></g>
<path d="M9.2,324.4 V326.4 M19.4,324.4 V326.4" stroke="#6a1ee6" stroke-width=".8"/>
<!-- eraser -->
<path d="M7.8,352.6 L15.4,345.8 L21.6,349.6 L14.2,356.6 Z" fill="#d6d6d6" stroke="#d6d6d6" stroke-width=".9"/>
<path d="M7.8,352.6 L7.8,354.4 L11.4,358.6 L14.2,356.6 M11.4,358.6 H21.2" stroke-width="1"/>
<!-- blend drops -->
<path d="M11,369.6 Q6.2,377.4 7.6,380.8 Q9,383.6 11.6,383.6 Q14.4,383.4 15,380.6 Q15.6,377 11,369.6 Z" fill="#9a9a9a" stroke="#d0d0d0" stroke-width=".8"/>
<path d="M17.6,369.6 Q13,377.4 14.2,380.8 Q15.6,383.6 18.2,383.6 Q21,383.4 21.6,380.6 Q22.2,377 17.6,369.6 Z" fill="#b4b4b4" stroke="#d0d0d0" stroke-width=".8"/>
<!-- cake -->
<g stroke="none"><path d="M8,409.2 Q14.5,412.8 21,409.2 L20.6,412 Q14.5,414.6 8.4,412 Z" fill="#f2e11e"/>
<ellipse cx="14.5" cy="408.4" rx="6.6" ry="2.6" fill="#f0628c"/><ellipse cx="14.5" cy="405.2" rx="5.6" ry="2.4" fill="#f0628c"/><ellipse cx="14.5" cy="402.2" rx="4.2" ry="2.2" fill="#f0628c"/><ellipse cx="14.5" cy="399.6" rx="2.6" ry="1.8" fill="#f0628c"/><circle cx="14.6" cy="397.6" r="1.1" fill="#e8385e"/></g>
<!-- gradient -->
<rect x="8" y="422" width="13" height="12.4" rx="1.8" fill="url(#gradtool)" stroke="#c8c8c8" stroke-width=".9"/>
<!-- line -->
<path d="M7,459 L21,445"/>
<!-- text -->
<text x="14.5" y="481.2" font-family="Liberation Sans, sans-serif" font-size="17" text-anchor="middle" fill="#d8d8d8" stroke="none">A</text>
<!-- frame -->
<rect x="8.6" y="493" width="12" height="12.4" rx="1.5"/><path d="M6.8,500.6 L22.4,495.8 M6.8,503.4 L22.4,498.6" stroke="#404040" stroke-width="3"/><path d="M6.8,500.4 L22.4,495.6 M6.8,503.6 L22.4,498.8"/>
<!-- ruler -->
<path d="M8.6,516.8 L21.4,517 L9.2,528.4 Z" stroke-width="1.9" stroke-linejoin="miter"/>
<!-- balloon -->
<path d="M8,538.6 H21.6 V544.8" stroke-dasharray="1.1 1.3" stroke-width="1"/>
<path d="M8,538.6 Q16.6,545 9.6,550.6 L8.4,552.4 Q17.4,551.6 21.6,544.8" stroke-width="1.2"/>
</g>
<g id="navi" stroke="#d6d6d6" fill="none" stroke-width="1" stroke-linejoin="round"><circle cx="87.3" cy="140.6" r="5.6"/><path d="M84.3,140.6 H90.3"/><circle cx="109.4" cy="140.6" r="5.6"/><path d="M106.4,140.6 H112.4 M109.4,137.6 V143.6"/><circle cx="131" cy="140.6" r="5.6"/><rect x="128.4" y="138.0" width="5.2" height="5.2" rx="1" fill="#d6d6d6" stroke="none"/><rect x="151.0" y="135.6" width="6" height="6"/><rect x="155.39999999999998" y="139.6" width="6" height="6"/><path d="M152.39999999999998,137.0 h3.2 v3.2 h-3.2 Z" fill="#d6d6d6" stroke="none" opacity=".55"/><path d="M158.79999999999998,137.2 l1.4,1.4 M153.0,143.2 l1.4,1.4" /><rect x="173.2" y="135.79999999999998" width="9.6" height="9.6"/><path d="M175.6,138.2 L180.4,143.0 M175.4,140.4 V138.0 H177.8 M180.6,140.79999999999998 V143.2 H178.2"/><path d="M82.7,157.60000000000002 A4.8,4.8 0 1 1 86.1,163.5"/><path d="M80.3,156.20000000000002 L84.7,156.4 L82.3,160.20000000000002 Z" fill="#d6d6d6" stroke="none"/><path d="M114.0,157.60000000000002 A4.8,4.8 0 1 0 110.60000000000001,163.5"/><path d="M116.4,156.20000000000002 L112.0,156.4 L114.4,160.20000000000002 Z" fill="#d6d6d6" stroke="none"/><circle cx="131" cy="158.8" r="5.6"/><path d="M131,158.8 V153.20000000000002" /><circle cx="131" cy="158.8" r="1.2" fill="#d6d6d6" stroke="none"/><path d="M150,154.60000000000002 L154.4,158.8 L150,163.0 Z"/><path d="M162.2,154.4 L157.6,158.8 L162.2,163.20000000000002 Z" fill="#d6d6d6"/><path d="M156,153.20000000000002 V164.4" stroke-width=".9"/><path d="M173.8,152.8 L178,157.0 L182.2,152.8 Z" fill="#d6d6d6"/><path d="M174,164.8 L178,160.8 L182,164.8 Z"/><path d="M172.4,158.8 H183.6" stroke-width=".9"/><rect x="58.5" y="41.5" width="9" height="8" rx="1" fill="#707070" stroke="#c8c8c8" stroke-width=".9"/><path d="M58.5,43.5 V40.2 H66" stroke-width=".8"/><rect x="58.6" y="177" width="9" height="9" rx="1" stroke-width="1"/><path d="M60,184.6 V181.5 L62,183 L64,180.5 L66.2,182 V184.6 Z" fill="#9a9a9a" stroke="none"/></g><g id="subi" stroke="#777777" fill="none" stroke-width="1" stroke-linejoin="round"><circle cx="131" cy="422.5" r="5.6"/><path d="M128,422.5 H134"/><circle cx="153" cy="422.5" r="5.6"/><path d="M150,422.5 H156 M153,419.5 V425.5"/><rect x="172.8" y="417.5" width="6" height="6"/><rect x="177.2" y="421.5" width="6" height="6"/><path d="M174.2,418.9 h3.2 v3.2 h-3.2 Z" fill="#777777" stroke="none" opacity=".55"/><path d="M180.6,419.1 l1.4,1.4 M174.8,425.1 l1.4,1.4" /><path d="M82.7,439.8 A4.8,4.8 0 1 1 86.1,445.7"/><path d="M80.3,438.4 L84.7,438.6 L82.3,442.4 Z" fill="#777777" stroke="none"/><path d="M114.0,439.8 A4.8,4.8 0 1 0 110.60000000000001,445.7"/><path d="M116.4,438.4 L112.0,438.6 L114.4,442.4 Z" fill="#777777" stroke="none"/><circle cx="131" cy="441" r="5.6"/><path d="M131,441 V435.4" /><circle cx="131" cy="441" r="1.2" fill="#777777" stroke="none"/><path d="M150,436.8 L154.4,441 L150,445.2 Z"/><path d="M162.2,436.6 L157.6,441 L162.2,445.4 Z" fill="#777777"/><path d="M156,435.4 V446.6" stroke-width=".9"/><path d="M173.8,435 L178,439.2 L182.2,435 Z" fill="#777777"/><path d="M174,447 L178,443 L182,447 Z"/><path d="M172.4,441 H183.6" stroke-width=".9"/><path d="M114.5,454.7 L109.5,459.7 L114.5,464.7 M132.5,454.7 L137.5,459.7 L132.5,464.7"/><path d="M173.6,456.7 H182.4 M174.6,456.7 L175.2,465.09999999999997 H180.8 L181.4,456.7 M176.4,456.7 V455.09999999999997 H179.6 V456.7 M176.8,458.7 V463.3 M178,458.7 V463.3 M179.2,458.7 V463.3" stroke-width=".8"/></g><g stroke="#d6d6d6" fill="none" stroke-width="1" stroke-linejoin="round" stroke-linecap="round"><path d="M40.4,465.3 L41.4,462.5 L46.2,457.7 L48,459.5 L43.2,464.3 Z" stroke-width=".9"/><path d="M46,456.3 L49.4,459.7" stroke-width="1.6"/><path d="M48.2,457.5 L50.2,455.09999999999997" stroke-width="2.6"/><path d="M150.6,464.5 V455.3 H154.4 L155.6,456.7 H159.2 V459.09999999999997 M150.6,464.5 L152.6,459.09999999999997 H162.6 L160.6,464.5 Z" fill="#d6d6d6" stroke-width=".8"/><path d="M160.4,454.3 V457.5 M158.8,455.9 H162" stroke-width="1"/></g>
<g id="cmd" stroke="#d6d6d6" fill="none" stroke-width="1" stroke-linejoin="round" stroke-linecap="round">
<path d="M255.4,23.7 H266.8 M255.4,28.1 H266.8 M255.4,32.5 H266.8" stroke-width="1.7" stroke-linecap="butt"/>
<g stroke="#8993b1"><rect x="276.5" y="25" width="10" height="9" stroke-width="1"/><path d="M279,32 L281,27.5 L286.5,21.5 L289,23.8 L283.5,30 Z" fill="#8993b1" stroke="#596685" stroke-width=".6"/></g>
<path d="M298,26.2 L302,22.2 L306,26.2 M298,30.4 L302,34.4 L306,30.4" stroke-width="1.1"/>
<rect x="313.2" y="21.3" width="14.2" height="13.6" rx="2.2" stroke-width="1.1"/>
<ellipse cx="320.3" cy="28.1" rx="5" ry="3.5" transform="rotate(-24 320.3 28.1)" stroke-width="1.1"/><ellipse cx="320" cy="28.4" rx="2.5" ry="1.6" transform="rotate(-24 320 28.4)" stroke-width="1"/>
<path d="M344.3,21.6 H353.4 V29 M344.3,21.6 V31.6 L347.6,34.8 H349.5 M344.3,31.6 H347.6 V34.8" stroke-width="1.1"/>
<circle cx="353.6" cy="33.4" r="3.3" fill="#d6d6d6" stroke="none"/><path d="M351.6,33.4 H355.6 M353.6,31.4 V35.4" stroke="#4a4a4a" stroke-width="1"/>
<path d="M365,34 V23.2 H369.6 L371,24.8 H374.6 V27.4 M365,34 L367.6,27.4 H378.8 L376.2,34 Z" fill="#d6d6d6" stroke-width=".8"/><path d="M375.6,24.6 Q375.8,22.4 378.2,22.2 M376.8,20.8 L378.6,22.2 L376.8,23.6" stroke-width=".9"/>
<g stroke="#727272"><path d="M385.6,33.8 V31 L388.4,26.2 H397.6 L400.4,31 V33.8 Z" fill="#626262" stroke-width=".8"/><path d="M393,21.2 V28.6 M390.4,26.2 L393,28.8 L395.6,26.2" stroke-width="1"/></g>
<path d="M406.5,26.2 L410.5,22.2 L414.5,26.2 M406.5,30.4 L410.5,34.4 L414.5,30.4" stroke-width="1.1"/>
<path d="M434.6,21.6 L431,25 L434.6,28.4 M431.4,25 H437.6 A3.7,3.7 0 0 1 437.6,32.4 H432.6" stroke-width="1.3"/>
<path d="M458.6,21.6 L462.2,25 L458.6,28.4 M461.8,25 H455.6 A3.7,3.7 0 0 0 455.6,32.4 H460.6" stroke-width="1.3" stroke="#727272"/>
<path d="M489.60,28.00 L492.30,28.00 M489.12,29.80 L491.46,31.15 M487.80,31.12 L489.15,33.46 M486.00,31.60 L486.00,34.30 M484.20,31.12 L482.85,33.46 M482.88,29.80 L480.54,31.15 M482.40,28.00 L479.70,28.00 M482.88,26.20 L480.54,24.85 M484.20,24.88 L482.85,22.54 M486.00,24.40 L486.00,21.70 M487.80,24.88 L489.15,22.54 M489.12,26.20 L491.46,24.85 " stroke-width="1.1"/>
<g stroke="#727272" stroke-width=".8"><rect x="501.6" y="22.4" width="9" height="9" stroke-dasharray="1.2 1"/><rect x="504.6" y="25.4" width="9" height="9" stroke-dasharray="1.2 1" fill="#5a5a5a"/></g>
<path d="M530,21.4 L536.8,28 L530,34.8 L523.4,28 Z" fill="#f0f0f0" stroke="none"/><path d="M523.4,28 L530,34.8 L536.8,28 Q530,25.6 523.4,28 Z" fill="#4a4a4a" stroke="none"/><path d="M530,21.4 L536.8,28 L530,34.8 L523.4,28 Z" stroke-width=".9"/><path d="M536.2,29.4 Q538.6,32.6 537.4,33.6 Q536,34.4 535.4,32.8 Q535.2,31.4 536.2,29.4 Z" fill="#d6d6d6" stroke="none"/>
<rect x="546.6" y="23.4" width="10.2" height="10.2" stroke-width="1"/><path d="M551.7,23.4 V19.6" stroke-width="1"/>
<g fill="#d6d6d6" stroke="none"><rect x="550.6" y="18.6" width="2.2" height="2.2"/><rect x="545.5" y="22.3" width="2.2" height="2.2"/><rect x="555.7" y="22.3" width="2.2" height="2.2"/><rect x="545.5" y="32.5" width="2.2" height="2.2"/><rect x="555.7" y="32.5" width="2.2" height="2.2"/><rect x="550.6" y="32.5" width="2.2" height="2.2"/><rect x="545.5" y="27.4" width="2.2" height="2.2"/><rect x="555.7" y="27.4" width="2.2" height="2.2"/></g>
<g stroke="#727272" stroke-width=".8"><rect x="573.4" y="22.4" width="11.2" height="11.2" stroke-dasharray="1.2 1"/><path d="M573.4,22.4 L584.6,33.6"/><rect x="595.4" y="22.4" width="11.2" height="11.2" stroke-dasharray="1.2 1"/><path d="M606.6,22.4 V33.6 H595.4 Z" fill="#666" stroke="none"/></g>
<path d="M625.4,25.6 L631.3,31.2 L637.2,25.6" stroke="#f0f0f0" stroke-width="1.4"/>
<path d="M627,46 L631,50 L635,46" stroke="#e0e0e0" stroke-width="1.1"/>
<path d="M255.2,46.2 L259.8,50.8 M259.8,46.2 L255.2,50.8" stroke="#c4cbe0" stroke-width=".9"/>
</g>
<defs><linearGradient id="gq" x1="0" y1="0" x2="0" y2="1"><stop offset="0" stop-color="#e0e0e0"/><stop offset="1" stop-color="#555"/></linearGradient></defs><g id="qaicons" stroke="#d8d8d8" fill="none" stroke-width="1" stroke-linejoin="round" stroke-linecap="round"><g transform="translate(649.6,84) scale(0.85)"><path d="M-4.6,-6.4 L2.6,2.6 M4.6,-6.4 L-2.6,2.6" stroke-width="1.5"/><circle cx="-3.6" cy="4.2" r="2.1" stroke-width="1.1"/><circle cx="3.6" cy="4.2" r="2.1" stroke-width="1.1"/></g><rect x="652.2" y="85.4" width="6.4" height="6.6" rx=".8" stroke-width="1"/><path d="M654.0,85.4 V84.0 H656.8000000000001 V85.4" stroke-width=".9"/><rect x="695.6" y="78.6" width="7" height="8.4" rx="1" fill="none"/><rect x="697.6" y="80.8" width="7.4" height="8.6" rx="1" fill="#d8d8d8"/><path d="M699.0,83 H703.6" stroke="#4d4d4d" stroke-width=".9"/><path d="M699.0,85 H703.6" stroke="#4d4d4d" stroke-width=".9"/><path d="M699.0,87 H703.6" stroke="#4d4d4d" stroke-width=".9"/><rect x="703.4" y="84.8" width="6.4" height="6.6" rx=".8" stroke-width="1"/><path d="M705.1999999999999,84.8 V83.39999999999999 H708.0 V84.8" stroke-width=".9"/><g transform="translate(751.6,85) scale(1.0)"><path d="M-4.6,-6.4 L2.6,2.6 M4.6,-6.4 L-2.6,2.6" stroke-width="1.5"/><circle cx="-3.6" cy="4.2" r="2.1" stroke-width="1.1"/><circle cx="3.6" cy="4.2" r="2.1" stroke-width="1.1"/></g><rect x="646.0" y="97.5" width="8" height="9.4" rx="1" fill="none"/><rect x="649.0" y="100.1" width="8.2" height="9.6" rx="1" fill="#d8d8d8"/><path d="M650.6,102.5 H655.6" stroke="#4d4d4d" stroke-width=".9"/><path d="M650.6,104.5 H655.6" stroke="#4d4d4d" stroke-width=".9"/><path d="M650.6,106.5 H655.6" stroke="#4d4d4d" stroke-width=".9"/><path d="M700.6,98.9 H696.2 V108.9 H700.2 M703.6,98.9 H706.8000000000001 V101.9 M699.0,98.9 V97.3 H704.2 V98.9" stroke-width="1.1"/><rect x="701.2" y="102.5" width="6.8" height="8" rx="1" fill="#d8d8d8"/><path d="M702.6,104.7 H706.6" stroke="#4d4d4d" stroke-width=".9"/><path d="M702.6,106.7 H706.6" stroke="#4d4d4d" stroke-width=".9"/><path d="M702.6,108.7 H706.6" stroke="#4d4d4d" stroke-width=".9"/><path d="M746.2,99.9 L755.8000000000001,97.7 L757.2,108.9 L747.2,108.1 Z" stroke-dasharray="1.4 1.2" stroke-width="1"/><rect x="745.0" y="98.7" width="2.4" height="2.4" fill="#d8d8d8" stroke="none"/><rect x="754.6" y="96.5" width="2.4" height="2.4" fill="#d8d8d8" stroke="none"/><rect x="756.0" y="107.7" width="2.4" height="2.4" fill="#d8d8d8" stroke="none"/><rect x="746.0" y="106.89999999999999" width="2.4" height="2.4" fill="#d8d8d8" stroke="none"/><path d="M645.6,125.6 L647.0,121.4 L654.0,114.8 L657.0,117.8 L650.0,124.4 Z" fill="#d8d8d8" stroke-width=".6"/><path d="M645.2,128 H654.0" stroke-width="1.1"/><path d="M658.6,125.4 V129 H655.0 Z" fill="#d8d8d8" stroke="none"/><rect x="695.6" y="116" width="12" height="12" rx="1.2" stroke-width="1.1"/><path d="M695.6,120 H707.6 M695.6,124 H707.6" stroke-width="1"/><path d="M700.0,118 H703.2 M700.0,122 H703.2 M700.0,126 H703.2" stroke-width="1.1"/><rect x="745.6" y="115.6" width="12" height="9.4" rx="1" fill="url(#gq)" stroke-width="1"/><path d="M745.6,127.2 H757.6 M747.6,125 V127.2 M755.6,125 V127.2" stroke-width="1.1"/><rect x="645.6" y="134.5" width="12" height="12" rx="1.4" fill="#d8d8d8" stroke-width=".8"/><path d="M647.0,145.1 V137.5 L648.4,136.1 L649.4,141.1 L650.4,135.9 V145.1 Z M653.0,145.1 V135.9 L654.2,139.5 L655.2,136.3 L656.4,138.5 V145.1 Z" fill="#3c3c3c" stroke="none"/><rect x="695.4" y="134.3" width="11" height="11" rx="1" stroke-width="1"/><path d="M700.8000000000001,136.1 L704.2,137.7 V141.5 L700.8000000000001,143.3 L697.4,141.5 V137.7 Z M697.4,137.7 L700.8000000000001,139.3 L704.2,137.7 M700.8000000000001,139.3 V143.3" stroke-width=".8"/><circle cx="705.8000000000001" cy="145.1" r="3" fill="#d8d8d8" stroke="#4d4d4d" stroke-width=".6"/><path d="M704.0,145.1 H707.6 M705.8000000000001,143.3 V146.9" stroke="#4d4d4d" stroke-width="1"/><path d="M750.6,140.9 L756.6,143.7 L750.6,146.7 L744.6,143.7 Z" fill="#d8d8d8" stroke="none"/><path d="M750.6,134.9 L756.6,137.9 L750.6,141.1 L744.6,137.9 Z" fill="#d8d8d8" stroke="#4d4d4d" stroke-width=".7"/><path d="M750.6,136.5 L749.0,138.3 H752.2 Z M750.6,138.1 V139.9" stroke="#4d4d4d" stroke-width=".8" fill="#4d4d4d"/><circle cx="756.2" cy="135.7" r="2.7" fill="#4d4d4d" stroke-width=".9"/><path d="M754.8000000000001,135.7 H757.6 M756.2,134.3 V137.1" stroke-width=".9"/><path d="M651.0,159.4 L656.8000000000001,162.20000000000002 L651.0,165.00000000000003 L645.2,162.20000000000002 Z" fill="#4d4d4d" stroke-width="1.1"/><path d="M651.0,156.2 L656.8000000000001,159.0 L651.0,161.8 L645.2,159.0 Z" fill="#4d4d4d" stroke-width="1.1"/><path d="M651.0,153.0 L656.8000000000001,155.8 L651.0,158.60000000000002 L645.2,155.8 Z" fill="#4d4d4d" stroke-width="1.1"/><path d="M658.6,162.4 V166 H655.0 Z" fill="#d8d8d8" stroke="none"/><rect x="695.8000000000001" y="153" width="11.6" height="11.6" stroke="#6e6e6e" stroke-dasharray="1.5 1.2" stroke-width="1"/><rect x="745.8000000000001" y="153" width="11.6" height="11.6" stroke="#d8d8d8" stroke-dasharray="1.5 1.2" stroke-width="1"/><path d="M758.6,162.4 V166 H755.0 Z" fill="#d8d8d8" stroke="none"/><circle cx="651.0" cy="178" r="5.6" fill="#626262" stroke="#6e6e6e" stroke-width=".8"/><path d="M647.0,181.8 L655.0,174.2" stroke="#4d4d4d" stroke-width="1.6"/><path d="M695.6,184 L701.0,178.6" stroke-width="1.5"/><path d="M703.2,173.8 Q703.2,176.4 705.8000000000001,176.4 Q703.2,176.4 703.2,179.0 Q703.2,176.4 700.6,176.4 Q703.2,176.4 703.2,173.8 Z" fill="#d8d8d8" stroke-width=".5"/><path d="M706.2,170.9 Q706.2,172.8 708.1,172.8 Q706.2,172.8 706.2,174.70000000000002 Q706.2,172.8 704.3000000000001,172.8 Q706.2,172.8 706.2,170.9 Z" fill="#d8d8d8" stroke-width=".5"/><path d="M698.8000000000001,171.5 Q698.8000000000001,173.2 700.5000000000001,173.2 Q698.8000000000001,173.2 698.8000000000001,174.89999999999998 Q698.8000000000001,173.2 697.1,173.2 Q698.8000000000001,173.2 698.8000000000001,171.5 Z" fill="#d8d8d8" stroke-width=".5"/><path d="M707.0,177.9 Q707.0,179.4 708.5,179.4 Q707.0,179.4 707.0,180.9 Q707.0,179.4 705.5,179.4 Q707.0,179.4 707.0,177.9 Z" fill="#d8d8d8" stroke-width=".5"/><path d="M709.0,181.4 V185 H705.4 Z" fill="#d8d8d8" stroke="none"/><rect x="745.6" y="172" width="12" height="12" rx="1.2" stroke-width="1.1"/><path d="M745.6,176.4 H757.6 M745.6,180.6 H757.6" stroke-width=".8"/><path d="M751.6,173 L750.0,175.4 H753.2 Z M749.2,178.6 H754.0 M751.6,183.6 L750.0,181.6 H753.2 Z" fill="#d8d8d8" stroke-width=".7"/><rect x="645.6" y="191" width="12" height="12" rx="1.4" fill="#d8d8d8" stroke-width=".8"/><path d="M647.0,201.6 V194 L648.4,192.6 L649.4,197.6 L650.4,192.4 V201.6 Z M653.0,201.6 V192.4 L654.2,196 L655.2,192.8 L656.4,195 V201.6 Z" fill="#3c3c3c" stroke="none"/><rect x="695.6" y="190.6" width="12" height="9.4" rx="1" fill="url(#gq)" stroke-width="1"/><path d="M695.6,202.2 H707.6 M697.6,200 V202.2 M705.6,200 V202.2" stroke-width="1.1"/><path d="M745.6,202.4 V192 H750.0 L751.2,193.6 H755.6 V196.4 M745.6,202.4 L748.2,196.4 H758.2 L755.6,202.4 Z" fill="#d8d8d8" stroke-width=".7"/><path d="M750.6,191.6 Q752.6,189.6 754.6,191.6" stroke-width=".9"/><path d="M758.6,200.4 V204 H755.0 Z" fill="#d8d8d8" stroke="none"/><path d="M645.6,221.4 V211 H650.0 L651.2,212.6 H655.6 V215.4 M645.6,221.4 L648.2,215.4 H658.2 L655.6,221.4 Z" fill="#d8d8d8" stroke-width=".7"/><path d="M650.6,210.6 Q652.6,208.6 654.6,210.6" stroke-width=".9"/><path d="M658.6,219.4 V223 H655.0 Z" fill="#d8d8d8" stroke="none"/><circle cx="701.6" cy="216" r="6" fill="#8a8a8a" stroke-width=".9"/><path d="M697.36,220.24 A6,6 0 0 0 705.84,211.76 Z" fill="#e6e6e6" stroke="none"/><rect x="701.8000000000001" y="216.4" width="2" height="2" fill="#6a6a6a" stroke="none"/><rect x="703.8000000000001" y="218.4" width="2" height="2" fill="#6a6a6a" stroke="none"/><rect x="703.8000000000001" y="214.4" width="2" height="2" fill="#6a6a6a" stroke="none"/><rect x="699.8000000000001" y="218.4" width="2" height="2" fill="#6a6a6a" stroke="none"/><rect x="701.8000000000001" y="212.4" width="2" height="2" fill="#6a6a6a" stroke="none"/><circle cx="750.4" cy="214.8" r="5.2" stroke-width="1.1"/><path d="M754.2,218.6 L758.0,222.4" stroke-width="1.5"/><path d="M747.8000000000001,214.8 H753.0" stroke-width="1"/><path d="M750.4,212.2 V217.4" stroke-width="1"/><circle cx="650.4" cy="232.8" r="5.2" stroke-width="1.1"/><path d="M654.2,236.6 L658.0,240.4" stroke-width="1.5"/><path d="M647.8000000000001,232.8 H653.0" stroke-width="1"/></g>
<g stroke="#d8d8d8" fill="none"><circle cx="670.6" cy="45.4" r="4.4" stroke-width="1.5"/><path d="M672.6,47.4 L675.4,50.2" stroke-width="1.6"/><circle cx="670.6" cy="45.4" r="1.3" fill="#d8d8d8" stroke="none"/></g>
<g id="lyicons" stroke="#d8d8d8" fill="none" stroke-width="1" stroke-linejoin="round" stroke-linecap="round"><path d="M671,312.2 L677,315.0 L671,317.8 L665,315.0 Z" fill="#4a4a4a" stroke-width="1.1"/><path d="M671,309.29999999999995 L677,312.09999999999997 L671,314.9 L665,312.09999999999997 Z" fill="#4a4a4a" stroke-width="1.1"/><path d="M671,306.4 L677,309.2 L671,312.0 L665,309.2 Z" fill="#4a4a4a" stroke-width="1.1"/><g stroke="#6e6e6e" stroke-width=".9"><path d="M727.2,308.2 L732.6,311 L727.2,313.8 L721.8,311 Z M723,313.4 L727.2,315.6 L731.4,313.4"/><path d="M745,309.4 L755,307.6 V309.8 L745,311.6 Z M745,312 H755 V316 H745 Z M747.6,312 V316 M750,312 V316 M752.4,312 V316"/></g><path d="M664,327.6 L667,325 L670,327.6 M664,331.4 L667,334 L670,331.4" stroke="#d8d8d8" stroke-width="1"/><path d="M710.6,327.6 L713.6,325 L716.6,327.6 M710.6,331.4 L713.6,334 L716.6,331.4" stroke="#d8d8d8" stroke-width="1"/><path d="M790.4,327.6 L793.4,325 L796.4,327.6 M790.4,331.4 L793.4,334 L796.4,331.4" stroke="#d8d8d8" stroke-width="1"/><rect x="666.6" y="345.4" width="8.6" height="8.6" rx="1" stroke-dasharray="1.4 1.1" stroke-width=".9"/><rect x="665.4" y="347.4" width="7.6" height="7.6" rx="1" fill="#8a8a8a" stroke-width=".9"/><path d="M691.2,355.4 L692,348.6 H694 L694.8,355.4 Z" fill="#d8d8d8" stroke-width=".6"/><path d="M691.6,348.2 H694.4 V346.4 H691.6 Z M693,344.4 V346" stroke-width=".9"/><path d="M689.8,346.4 L687.6,345.6 M689.8,348 L687.6,348.6 M696.2,346.4 L698.4,345.6 M696.2,348 L698.4,348.6" stroke-width=".8"/><rect x="711.2" y="349.2" width="7.6" height="6.2" rx=".8" fill="#d8d8d8" stroke="none"/><path d="M712.8,349.2 V347.4 A2.2,2.2 0 0 1 717.2,347.4 V349.2" stroke-width="1.1"/><g fill="#d8d8d8" stroke="none"><rect x="735.4" y="345" width="2.8" height="2.8"/><rect x="738.2" y="347.8" width="2.8" height="2.8"/><rect x="741" y="345" width="2.2" height="2.8"/><rect x="741" y="350.6" width="2.2" height="2.8"/><rect x="731.4" y="350.4" width="5.8" height="4.8" rx=".6"/></g><path d="M732.6,350.4 V349 A1.7,1.7 0 0 1 736,349 V350.4" stroke-width=".9"/><g stroke="#787878" stroke-width="1.1"><rect x="753" y="346.4" width="6" height="6.6"/><path d="M761,348.6 L764.6,345.6 L768,348.6 M761,352.2 L764.6,355.2 L768,352.2 M754,354 L759,350.6"/><path d="M779.4,346.4 H786 L779.4,353.4 Z" fill="#6a6a6a"/><path d="M788,348.6 L791,345.6 L794,348.6 M788,352.2 L791,355.2 L794,352.2 M780.4,354.4 L785.4,351"/></g><path d="M645.9,377.8 Q651.5,372.40000000000003 657.1,377.8 Q651.5,382.8 645.9,377.8 Z" stroke-width="1"/><circle cx="651.5" cy="377.6" r="2.1" fill="#d8d8d8" stroke="none"/><path d="M645.9,409.5 Q651.5,404.1 657.1,409.5 Q651.5,414.5 645.9,409.5 Z" stroke-width="1"/><circle cx="651.5" cy="409.3" r="2.1" fill="#d8d8d8" stroke="none"/><path d="M645.9,442 Q651.5,436.6 657.1,442 Q651.5,447 645.9,442 Z" stroke-width="1"/><circle cx="651.5" cy="441.8" r="2.1" fill="#d8d8d8" stroke="none"/><path d="M645.9,506 Q651.5,500.6 657.1,506 Q651.5,511 645.9,506 Z" stroke-width="1"/><circle cx="651.5" cy="505.8" r="2.1" fill="#d8d8d8" stroke="none"/><path d="M667.4,412.6 L668.4,410 L673,405.4 L674.8,407.2 L670.2,411.8 Z" stroke-width=".9"/><path d="M666.6,414.4 H675.6" stroke-width="1.1"/><path d="M652,585 H662.4 V590.4 M652,585 V592.4 Q652.4,594.8 656.6,595" stroke-width="1.1"/><circle cx="661.2" cy="593.2" r="2.6" fill="#d8d8d8" stroke="none"/><path d="M659.6,593.2 H662.8 M661.2,591.6 V594.8" stroke="#484848" stroke-width=".9"/><path d="M674,585 H684.4 V590.4 M674,585 V593.6 Q674.2,595 678.6,595" stroke-width="1.1"/><circle cx="678.8" cy="589.4" r="2.5" stroke-width=".9"/><circle cx="683.2" cy="593.2" r="2.6" fill="#d8d8d8" stroke="none"/><path d="M681.6,593.2 H684.8 M683.2,591.6 V594.8" stroke="#484848" stroke-width=".9"/><path d="M694.6,594 V585 H698.6 L699.8,586.4 H705.4 V594 Z" fill="#b8b8b8" stroke-width=".7"/><circle cx="705" cy="593.4" r="2.6" fill="#d8d8d8" stroke="#484848" stroke-width=".5"/><path d="M703.4,593.4 H706.6 M705,591.8 V595" stroke="#484848" stroke-width=".9"/><rect x="720.4" y="584.4" width="7.4" height="7.4" rx="1.4" stroke-width="1.1"/><rect x="716.6" y="588.4" width="7.4" height="7.4" rx="1.4" fill="#484848" stroke-width="1.1"/><rect x="722.6" y="586.4" width="3" height="3" fill="#d8d8d8" stroke="none"/><path d="M718.6,593.4 H721.8 M719.8,592.2 L718.6,593.4 L719.8,594.6" stroke-width=".8"/><rect x="742.8" y="584.4" width="7.4" height="7.4" rx="1.4" stroke-width="1.1"/><rect x="739" y="588.4" width="7.4" height="7.4" rx="1.4" fill="#484848" stroke-width="1.1"/><path d="M741,593.8 L744,590.8 M741,591.6 V593.8 H743.2" stroke-width=".8"/><rect x="761" y="584.6" width="10.8" height="10.8" rx="1.2" fill="#d8d8d8" stroke="none"/><circle cx="766.4" cy="590" r="3" fill="#484848" stroke="none"/><g stroke="#9a9a9a"><path d="M783.4,586.6 H793.4 M784.6,586.6 L785.2,595.2 H791.6 L792.2,586.6 M786.6,586.6 V584.8 H790.2 V586.6 M787,588.8 V593.4 M788.4,588.8 V593.4 M789.8,588.8 V593.4" stroke-width=".9"/></g></g>
<g transform="translate(83.5,52) scale(0.152) translate(-258,-77)"><use href="#artfill"/></g>
<g transform="translate(688.7,428.8) scale(0.0528) translate(-258,-77)"><use href="#artfill"/></g>
<g fill="none" stroke="#8eeaca" stroke-width="1.6" stroke-linecap="round" opacity=".9"><path d="M698,465 L698.6,485 M692,470 Q698,466 705,471 M693,474 L691,483 M704,473 L706,481 M695,478 L702,478 M696,485 L694,487 M700,484 L703,487"/></g>
<g id="misc" stroke="#d8d8d8" fill="none" stroke-width="1" stroke-linejoin="round" stroke-linecap="round"><path d="M211.6,49.4 L213,45.4 L219,39.4 L222,42.4 L216,48.4 Z" fill="#d8d8d8" stroke-width=".6"/><rect x="219.4" y="44.6" width="5" height="5" fill="#4a4a4a" stroke-width=".9"/><path d="M231,42.2 H234 M232.5,40.7 V43.7" stroke-width=".7"/><g stroke="#e6e9f6"><path d="M194.0,70.2 L196.79999999999998,62.6 L203.0,57.4 L206.6,61.0 L201.4,67.4 Z M194.0,70.2 L199.6,64.6" stroke-width="1"/><circle cx="200.0" cy="64.2" r=".8"/><path d="M203.79999999999998,56.6 L205.6,55.0 L209.0,58.4 L207.4,60.199999999999996 Z" fill="#e6e9f6"/></g><path d="M195.4,90.4 L197,85.6 L204,78.4 L208.4,82.8 L201.2,89.8 Z" stroke-width="1"/><path d="M195.4,90.4 L196.4,87.2 L198.6,89.4 Z M203,79.4 L207.4,83.8 L205.4,85.6 L201.2,81.4 Z" fill="#d8d8d8" stroke="none"/><path d="M204.8,77.6 L206.6,75.8 Q207.6,75 208.6,76 L210.8,78.2 Q211.6,79.2 210.8,80.2 L209.2,82 Z" fill="#d8d8d8" stroke="none"/><rect x="198.6" y="584.8" width="7.6" height="7.6" rx="1" stroke-width="1"/><rect x="201.4" y="587.6" width="7.6" height="7.6" rx="1" fill="#484848" stroke-width="1"/><path d="M203.4,591.4 H207 M205.2,589.6 V593.2" stroke-width=".9"/><g stroke="#a8a8a8"><path d="M221.4,586.6 H231.4 M222.6,586.6 L223.2,595.2 H229.6 L230.2,586.6 M224.6,586.6 V584.8 H228.2 V586.6 M225,588.8 V593.4 M226.4,588.8 V593.4 M227.8,588.8 V593.4" stroke-width=".9"/></g><g stroke="#8a8a8a" stroke-width=".9"><rect x="58.6" y="479" width="10" height="7" fill="#6a6a6a"/><path d="M60,481 H63 M60,483.4 H67"/><path d="M82.6,486 V482.6 A4.4,4.4 0 0 1 91.4,482.6 V486 Z"/><rect x="85" y="482" width="4" height="3.4" fill="#8a8a8a"/><rect x="105" y="479" width="11" height="7"/><path d="M107,479 V486 M114,479 V486 M107,482.5 H114"/></g><path d="M128.4,486.4 L129.6,483 L135.4,477.2 L138,479.8 L132.2,485.6 Z" fill="#d8d8d8" stroke-width=".6"/><circle cx="137.4" cy="485.6" r="2.1" stroke-width="1.2"/><path d="M137.4,482.4 V483.4 M137.4,487.8 V488.8 M134.2,485.6 H135.2 M139.6,485.6 H140.6 M135.2,483.4 L135.8,484 M139,487.2 L139.6,487.8 M135.2,487.8 L135.8,487.2 M139,484 L139.6,483.4" stroke-width=".9"/><rect x="172.4" y="510.4" width="6.4" height="5" rx=".6" fill="#d8d8d8" stroke="none"/><path d="M173.6,510.4 V508.4 A1.9,1.9 0 0 1 177.4,508.4" stroke-width="1"/><path d="M50.5,510.6 Q68,499.6 87,500.2 Q100,500.8 112,507.6 Q128,515.2 146,511.4 Q160,508.4 170.4,502.8 Q158,510.6 146,512.8 Q128,516.4 111,509.2 Q98,503.2 86,501.2 Q68,500.6 50.5,510.6 Z" fill="#0a0a0a" stroke="#0a0a0a" stroke-width=".5"/><path d="M159.6,528.0 L162.4,525.6 L165.20000000000002,528.0 M159.6,533.2 L162.4,535.6 L165.20000000000002,533.2" stroke="#d8d8d8" stroke-width="1"/><path d="M159.6,549.8 L162.4,547.4 L165.20000000000002,549.8 M159.6,555.0 L162.4,557.4 L165.20000000000002,555.0" stroke="#d8d8d8" stroke-width="1"/><path d="M173.2,572.4 L176,570 L178.8,572.4 M173.2,576.6 L176,579 L178.8,576.6" stroke="#d8d8d8" stroke-width="1"/><path d="M172.4,531.4 L175,534 L177.8,531.4 M172.4,535 L175,537.6 L177.8,535 M172.4,534.2 L173.4,535.2" stroke-width="1"/><rect x="172.2" y="553.2" width="5.6" height="6" rx="1" stroke-width="1"/><path d="M172.6,558.6 L177.4,553.6" stroke-width=".9"/><g stroke="none"><path d="M113.6,578 V574.6 H115 V572.8 H116.8 V571.4 H120.2 V572.8 H122 V574.6 H123.4 V578 Z" fill="#c8c8c8"/><path d="M128.4,579.6 V576 A5.4,5.4 0 0 1 139.2,576 V579.6 Z" fill="#c4cae0"/><path d="M144,579.6 V576 A5.2,5.2 0 0 1 154.4,576 V579.6 Z" fill="#a8a8a8"/><path d="M146,579.6 V576.6 A3.2,3.2 0 0 1 152.4,576.6 V579.6 Z" fill="#c4c4c4"/><path d="M159,579.6 V576 A5.2,5.2 0 0 1 169.4,576 V579.6 Z" fill="#8e8e8e"/><path d="M161.4,579.6 V577 A2.8,2.8 0 0 1 167,577 V579.6 Z" fill="#b4b4b4"/></g><circle cx="155" cy="591" r="5.2" stroke-width="1"/><path d="M155,591 V585.8" stroke-width=".9"/><circle cx="155" cy="591" r="1.1" fill="#d8d8d8" stroke="none"/><path d="M174.6,587.4 A2.9,2.9 0 1 0 178.2,590.6 L183,595.4 L181.4,596.8 L176.8,592 " stroke-width="1.2"/></g>
</svg>
</body>
</html>
